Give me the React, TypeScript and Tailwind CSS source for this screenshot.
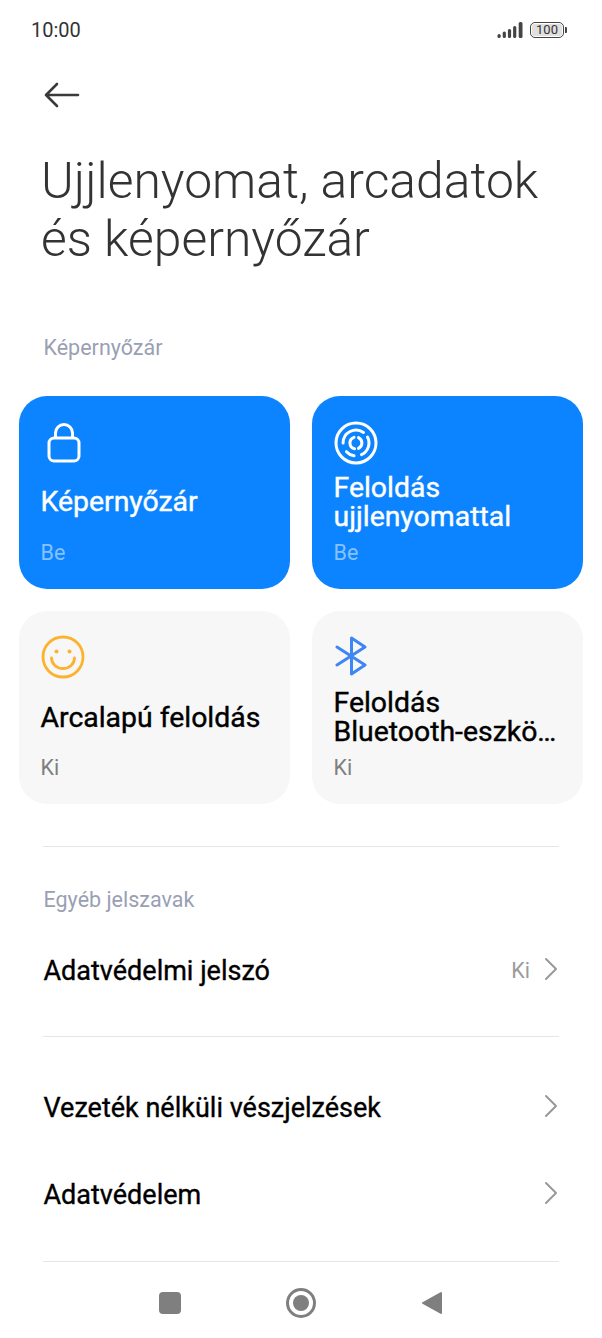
import React from "react";

const font = { fontFamily: "Roboto, sans-serif" };

function Chevron() {
  return (
    <svg width="16" height="24" viewBox="0 0 16 24" fill="none" stroke="#999" strokeWidth="2" strokeLinecap="round" strokeLinejoin="round" className="-mt-[4px]">
      <path d="M3 2 L13 12 L3 22" />
    </svg>
  );
}

function Card({ icon, title, sub, active, iconClass, titleClass }: { icon: React.ReactNode; title: React.ReactNode; sub: string; active?: boolean; iconClass: string; titleClass: string }) {
  return (
    <div className={`h-[193px] rounded-[28px] flex flex-col pl-[21.5px] pr-[20px] ${active ? "bg-[#0d84ff]" : "bg-[#f7f7f7]"}`}>
      <div className={`flex ${iconClass}`}>{icon}</div>
      <div className={`text-[28.4px] leading-[29px] font-normal [-webkit-text-stroke:0.4px] ${titleClass} ${active ? "text-white" : "text-black"}`}>{title}</div>
      <div className={`mt-auto mb-[24px] text-[21.5px] leading-[24px] ${active ? "text-[#85c2ff]" : "text-[#7f7f7f]"}`}>{sub}</div>
    </div>
  );
}

function Row({ label, value, className }: { label: string; value?: string; className: string }) {
  return (
    <div className={`flex items-center justify-between pl-[43.5px] pr-[43px] ${className}`}>
      <span className="text-[27px] leading-[30px] font-normal [-webkit-text-stroke:0.35px] text-black">{label}</span>
      <span className="flex items-center gap-[13px]">
        {value && <span className="text-[21.5px] text-[#9b9b9b]">{value}</span>}
        <Chevron />
      </span>
    </div>
  );
}

export default function App() {
  return (
    <div className="w-[602px] h-[1338px] bg-white overflow-hidden flex flex-col" style={font}>
      <div className="h-[60px] pl-[31px] pr-[35px] flex items-center justify-between">
        <span className="text-[20px] text-[#333]">10:00</span>
        <div className="flex items-center gap-[6px] -mt-[1px]">
          <svg width="27" height="16" viewBox="0 0 26 16" fill="#444">
            <rect x="0" y="12" width="3.2" height="4" rx="1.5" />
            <rect x="5.200" y="9.5" width="3.2" height="6.5" rx="1.5" />
            <rect x="10.400" y="7" width="3.2" height="9" rx="1.5" />
            <rect x="15.600" y="4" width="3.2" height="12" rx="1.5" />
            <rect x="21.200" y="0" width="3.800" height="16" rx="1.5" />
          </svg>
          <div className="flex items-center gap-[1px]">
            <div className="w-[34px] h-[16px] rounded-[5px] border-[1.5px] border-[#444] p-[1px] flex">
              <div className="flex-1 bg-[#e0e0e0] rounded-[2px] flex items-center justify-center text-[13px] leading-none text-[#333]">100</div>
            </div>
            <div className="w-[2px] h-[6px] bg-[#444] rounded-r-[1px]" />
          </div>
        </div>
      </div>

      <div className="pl-[44px] h-[34px] mt-[18px] flex items-center">
        <svg width="36" height="26" viewBox="0 0 36 26" fill="none" stroke="#3a3a3a" strokeWidth="2.6" strokeLinecap="round" strokeLinejoin="round">
          <path d="M2 13 H34 M13 2 L2 13 L13 24" />
        </svg>
      </div>

      <h1 className="pl-[41px] mt-[40px] text-[49.8px] leading-[58px] font-light text-[#333]">
        Ujjlenyomat, arcadatok
        <br />
        és képernyőzár
      </h1>

      <div className="pl-[43.5px] mt-[68px] text-[21.5px] leading-[24px] text-[#9a9fb4]">Képernyőzár</div>

      <div className="grid grid-cols-2 gap-[22px] px-[19px] mt-[36px]">
        <Card
          active
          title="Képernyőzár"
          sub="Be"
          iconClass="pt-[27px] h-[86px]"
          titleClass="mt-[5px]"
          icon={
            <svg width="36" height="40" viewBox="0 0 36 40" fill="none" stroke="#fff" strokeWidth="3" className="ml-[5px]">
              <rect x="3" y="15" width="30" height="23" rx="5" />
              <path d="M9.500 15 V10 A8.500 8.500 0 0 1 26.500 10 V15" />
            </svg>
          }
        />
        <Card
          active
          title={<>Feloldás<br />ujjlenyomattal</>}
          sub="Be"
          iconClass="pt-[25px] h-[77px]"
          titleClass=""
          icon={
            <svg width="44" height="44" viewBox="0 0 44 44" fill="none" stroke="#fff" strokeWidth="3" strokeLinecap="round">
              <circle cx="22" cy="22" r="20" />
              <path d="M9.100 22 A12.900 12.900 0 0 1 29.500 11.500" />
              <path d="M33.500 16 A12.900 12.900 0 0 1 27.500 33.700" />
              <path d="M20 34.800 A12.900 12.900 0 0 1 12.500 30.700" />
              <path d="M20 16.300 A6 6 0 0 0 20.500 27.800" />
              <path d="M24.500 16.600 A6 6 0 0 1 24.500 27.400" />
            </svg>
          }
        />
        <Card
          title="Arcalapú feloldás"
          sub="Ki"
          iconClass="pt-[24px] h-[92px]"
          titleClass=""
          icon={
            <svg width="44" height="44" viewBox="0 0 44 44" fill="none" stroke="#fdb22f" strokeWidth="2.8" strokeLinecap="round">
              <circle cx="22" cy="22" r="20" />
              <circle cx="15.500" cy="16.500" r="2" fill="#fdb22f" stroke="none" />
              <circle cx="28.500" cy="16.500" r="2" fill="#fdb22f" stroke="none" />
              <path d="M10.500 23 A11.500 10.500 0 0 0 33.500 23" />
            </svg>
          }
        />
        <Card
          title={<>Feloldás<br /><span className="block truncate">Bluetooth-eszközzel</span></>}
          sub="Ki"
          iconClass="pt-[25px] h-[77px]"
          titleClass=""
          icon={
            <svg width="34" height="40" viewBox="0 0 34 40" fill="none" stroke="#3e86f5" strokeWidth="3" strokeLinecap="round" strokeLinejoin="round" className="ml-[1px]">
              <path d="M2 11 L30 29 L16.500 38 V2 L30 11 L2 29" />
            </svg>
          }
        />
      </div>

      <div className="mx-[43px] mt-[42px] h-px bg-[#e6e6e6]" />
      <div className="pl-[43.5px] mt-[41px] text-[21.5px] leading-[24px] text-[#9a9fb4]">Egyéb jelszavak</div>
      <Row label="Adatvédelmi jelszó" value="Ki" className="mt-[44px] h-[30px]" />
      <div className="mx-[43px] mt-[50px] h-px bg-[#e6e6e6]" />
      <Row label="Vezeték nélküli vészjelzések" className="mt-[56px] h-[30px]" />
      <Row label="Adatvédelem" className="mt-[57px] h-[30px]" />
      <div className="mx-[43px] mt-[51px] h-px bg-[#e6e6e6]" />

      <div className="flex-1 pt-[6px] flex items-center justify-center">
        <div className="w-[284px] flex items-center justify-between">
          <div className="w-[22px] h-[22px] rounded-[4px] bg-[#7f7f7f]" />
          <div className="w-[30px] h-[30px] rounded-full border-[3px] border-[#7f7f7f] flex items-center justify-center">
            <div className="w-[16px] h-[16px] rounded-full bg-[#7f7f7f]" />
          </div>
          <svg width="22" height="24" viewBox="0 0 22 24" fill="#7f7f7f" stroke="#7f7f7f" strokeWidth="2" strokeLinejoin="round">
            <path d="M20 2 V22 L2 12 Z" />
          </svg>
        </div>
      </div>
    </div>
  );
}
